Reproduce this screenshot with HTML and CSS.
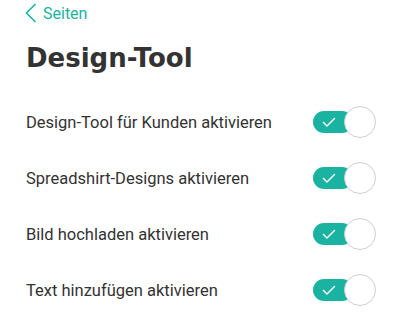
FILE: index.html
```html
<!DOCTYPE html>
<html lang="de">
<head>
<meta charset="utf-8">
<link rel="stylesheet" href="styles.css">
</head>
<body>
<div class="page">
  <a class="back" href="#">
    <svg class="chev" width="12" height="20" viewBox="0 0 12 20"><path d="M10.5 1 L1.5 10 L10.5 19" fill="none" stroke="currentColor" stroke-width="1.6"/></svg>
    <span>Seiten</span>
  </a>
  <h1 class="title">Design-Tool</h1>
  <div class="rows">
    <div class="row"><span class="label">Design-Tool für Kunden aktivieren</span><span class="toggle"><span class="track"><svg class="check" width="14" height="10" viewBox="0 0 14 10"><path d="M1 5 L5 9 L13 1" fill="none" stroke="#fff" stroke-width="1.4"/></svg></span><span class="knob"></span></span></div>
    <div class="row"><span class="label">Spreadshirt-Designs aktivieren</span><span class="toggle"><span class="track"><svg class="check" width="14" height="10" viewBox="0 0 14 10"><path d="M1 5 L5 9 L13 1" fill="none" stroke="#fff" stroke-width="1.4"/></svg></span><span class="knob"></span></span></div>
    <div class="row"><span class="label">Bild hochladen aktivieren</span><span class="toggle"><span class="track"><svg class="check" width="14" height="10" viewBox="0 0 14 10"><path d="M1 5 L5 9 L13 1" fill="none" stroke="#fff" stroke-width="1.4"/></svg></span><span class="knob"></span></span></div>
    <div class="row"><span class="label">Text hinzufügen aktivieren</span><span class="toggle"><span class="track"><svg class="check" width="14" height="10" viewBox="0 0 14 10"><path d="M1 5 L5 9 L13 1" fill="none" stroke="#fff" stroke-width="1.4"/></svg></span><span class="knob"></span></span></div>
  </div>
</div>
</body>
</html>
```
FILE: styles.css
```css
html, body { margin: 0; padding: 0; background: #fff; }
.page {
  padding: 0 23px 0 25px;
  font-family: Roboto, "Liberation Sans", sans-serif;
  color: #333;
}
.back {
  display: flex;
  align-items: center;
  gap: 6px;
  height: 26px;
  color: #1ab3a2;
  text-decoration: none;
  font-size: 16px;
}
.chev { display: block; }
.title {
  margin: 12px 0 16px 1px;
  height: 40px;
  line-height: 40px;
  font-family: "DejaVu Sans", sans-serif;
  font-weight: 700;
  font-size: 26px;
  color: #333;
}
.rows { display: flex; flex-direction: column; }
.row {
  height: 56px;
  display: flex;
  align-items: center;
  justify-content: space-between;
  padding-left: 1px;
}
.label { font-size: 16.5px; color: #333; }
.toggle {
  display: flex;
  align-items: center;
  width: 63px;
}
.track {
  width: 40px;
  height: 22px;
  border-radius: 11px;
  background: #1ab3a2;
  display: flex;
  align-items: center;
  padding-left: 9px;
  box-sizing: border-box;
}
.check { display: block; }
.knob {
  width: 32px;
  height: 32px;
  border-radius: 50%;
  background: #fff;
  border: 1px solid #cfcfcf;
  box-sizing: border-box;
  margin-left: -9px;
}
```
